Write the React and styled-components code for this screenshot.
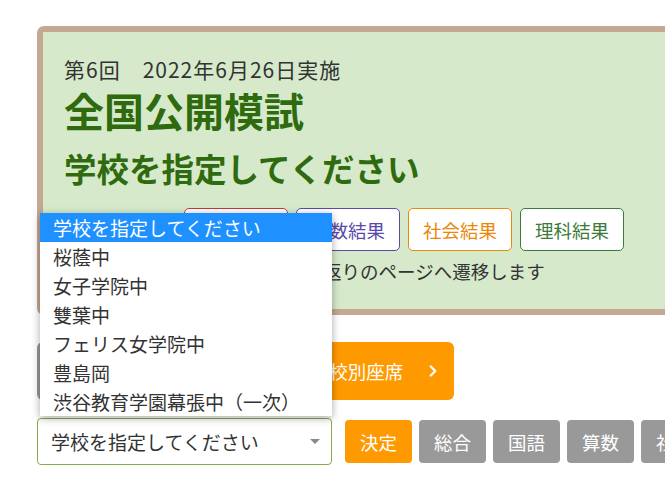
import styled, { createGlobalStyle } from "styled-components";
import { ChevronRight } from "lucide-react";

const GlobalStyle = createGlobalStyle`
  html, body {
    margin: 0;
    padding: 0;
    background: #fff;
    overflow: hidden;
  }
  body {
    font-family: "Noto Sans CJK JP", "Noto Sans", sans-serif;
    color: #333;
  }
`;

const subjects = [
  { label: "国語結果", color: "#c8383a" },
  { label: "算数結果", color: "#5b4aa6" },
  { label: "社会結果", color: "#e8890c" },
  { label: "理科結果", color: "#3d7b3c" },
];

const schools = [
  "学校を指定してください",
  "桜蔭中",
  "女子学院中",
  "雙葉中",
  "フェリス女学院中",
  "豊島岡",
  "渋谷教育学園幕張中（一次）",
];

const App = () => {
  return (
    <Page>
      <GlobalStyle />
      <Panel>
        <DateLine>第6回　2022年6月26日実施</DateLine>
        <Title>全国公開模試</Title>
        <SubTitle>学校を指定してください</SubTitle>
        <ResultRow>
          <RowLabel>教科別結果：</RowLabel>
          {subjects.map((s) => (
            <ResultButton key={s.label} $color={s.color}>
              {s.label}
            </ResultButton>
          ))}
        </ResultRow>
        <Note>各ボタンを押すと各教科の振り返りのページへ遷移します</Note>
      </Panel>

      <SeatRow>
        <SeatButton $bg="#999">全体座席表</SeatButton>
        <SeatButton $bg="#ff9900">
          学校別座席
          <Chevron>
            <ChevronRight size={18} strokeWidth={3.2} />
          </Chevron>
        </SeatButton>
      </SeatRow>

      <FilterRow>
        <SelectWrap>
          <Select>
            <span>学校を指定してください</span>
            <Caret />
          </Select>
          <Options>
            {schools.map((name, i) => (
              <Option key={name} $active={i === 0}>
                {name}
              </Option>
            ))}
          </Options>
        </SelectWrap>
        <SmallButton $bg="#ff9900">決定</SmallButton>
        <SmallButton $bg="#999">総合</SmallButton>
        <SmallButton $bg="#999">国語</SmallButton>
        <SmallButton $bg="#999">算数</SmallButton>
        <SmallButton $bg="#999">社会</SmallButton>
      </FilterRow>
    </Page>
  );
};

const Page = styled.div`
  padding: 26px 0 0 37px;
  width: 720px;
`;

const Panel = styled.section`
  width: 680px;
  box-sizing: border-box;
  background: #d6eacb;
  border: 6px solid #c4a891;
  border-radius: 7px;
  padding: 22px 21px 24px;
`;

const DateLine = styled.div`
  font-size: 21px;
  line-height: 30px;
  letter-spacing: 1px;
  color: #333;
`;

const Title = styled.h1`
  margin: 2px 0 0;
  font-size: 40px;
  line-height: 48px;
  font-weight: 700;
  color: #2f6a0e;
`;

const SubTitle = styled.h2`
  margin: 15px 0 0;
  font-size: 32.5px;
  line-height: 38px;
  font-weight: 700;
  color: #2f6a0e;
`;

const ResultRow = styled.div`
  display: flex;
  align-items: center;
  gap: 8px;
  margin-top: 21px;
`;

const RowLabel = styled.span`
  font-size: 18.5px;
  width: 112px;
`;

const ResultButton = styled.button`
  width: 104px;
  height: 43px;
  box-sizing: border-box;
  background: #fff;
  border: 1px solid ${(p) => p.$color};
  border-radius: 5px;
  color: ${(p) => p.$color};
  font-family: inherit;
  font-size: 18.5px;
  padding: 0;
`;

const Note = styled.p`
  margin: 6px 0 0;
  font-size: 18.5px;
  line-height: 28px;
  color: #333;
`;

const SeatRow = styled.div`
  display: flex;
  gap: 8px;
  margin-top: 27px;
`;

const SeatButton = styled.button`
  position: relative;
  width: ${(p) => (p.$bg === "#999" ? "209px" : "200px")};
  height: 58px;
  border: none;
  border-radius: 6px;
  background: ${(p) => p.$bg};
  color: #fff;
  font-family: inherit;
  font-size: 18.5px;
  padding: 0 0 0 6px;
`;

const Chevron = styled.span`
  position: absolute;
  right: 12px;
  top: 50%;
  transform: translateY(-50%);
  display: flex;
`;

const FilterRow = styled.div`
  display: flex;
  align-items: center;
  gap: 7px;
  margin-top: 18px;
`;

const SelectWrap = styled.div`
  position: relative;
  margin-right: 6px;
`;

const Select = styled.div`
  width: 295px;
  height: 47px;
  box-sizing: border-box;
  border: 1px solid #86ad4a;
  border-radius: 4px;
  background: #fff;
  display: flex;
  align-items: center;
  justify-content: space-between;
  padding: 0 11px 0 13px;
  font-size: 19px;
  color: #333;
`;

const Caret = styled.span`
  width: 0;
  height: 0;
  border-left: 5px solid transparent;
  border-right: 5px solid transparent;
  border-top: 5px solid #888;
`;

const Options = styled.ul`
  position: absolute;
  left: 3px;
  right: 0;
  bottom: calc(100% + 2px);
  margin: 0;
  padding: 0;
  list-style: none;
  background: #fff;
  box-shadow: 0 2px 8px rgba(0, 0, 0, 0.35);
`;

const Option = styled.li`
  height: 29px;
  line-height: 29px;
  padding-left: 13px;
  font-size: 19px;
  white-space: nowrap;
  background: ${(p) => (p.$active ? "#1e90ff" : "#fff")};
  color: ${(p) => (p.$active ? "#fff" : "#333")};
`;

const SmallButton = styled.button`
  flex: none;
  height: 43px;
  padding: 0 15px;
  border: none;
  border-radius: 4px;
  background: ${(p) => p.$bg};
  color: #fff;
  font-family: inherit;
  font-size: 18.5px;
`;

export default App;
